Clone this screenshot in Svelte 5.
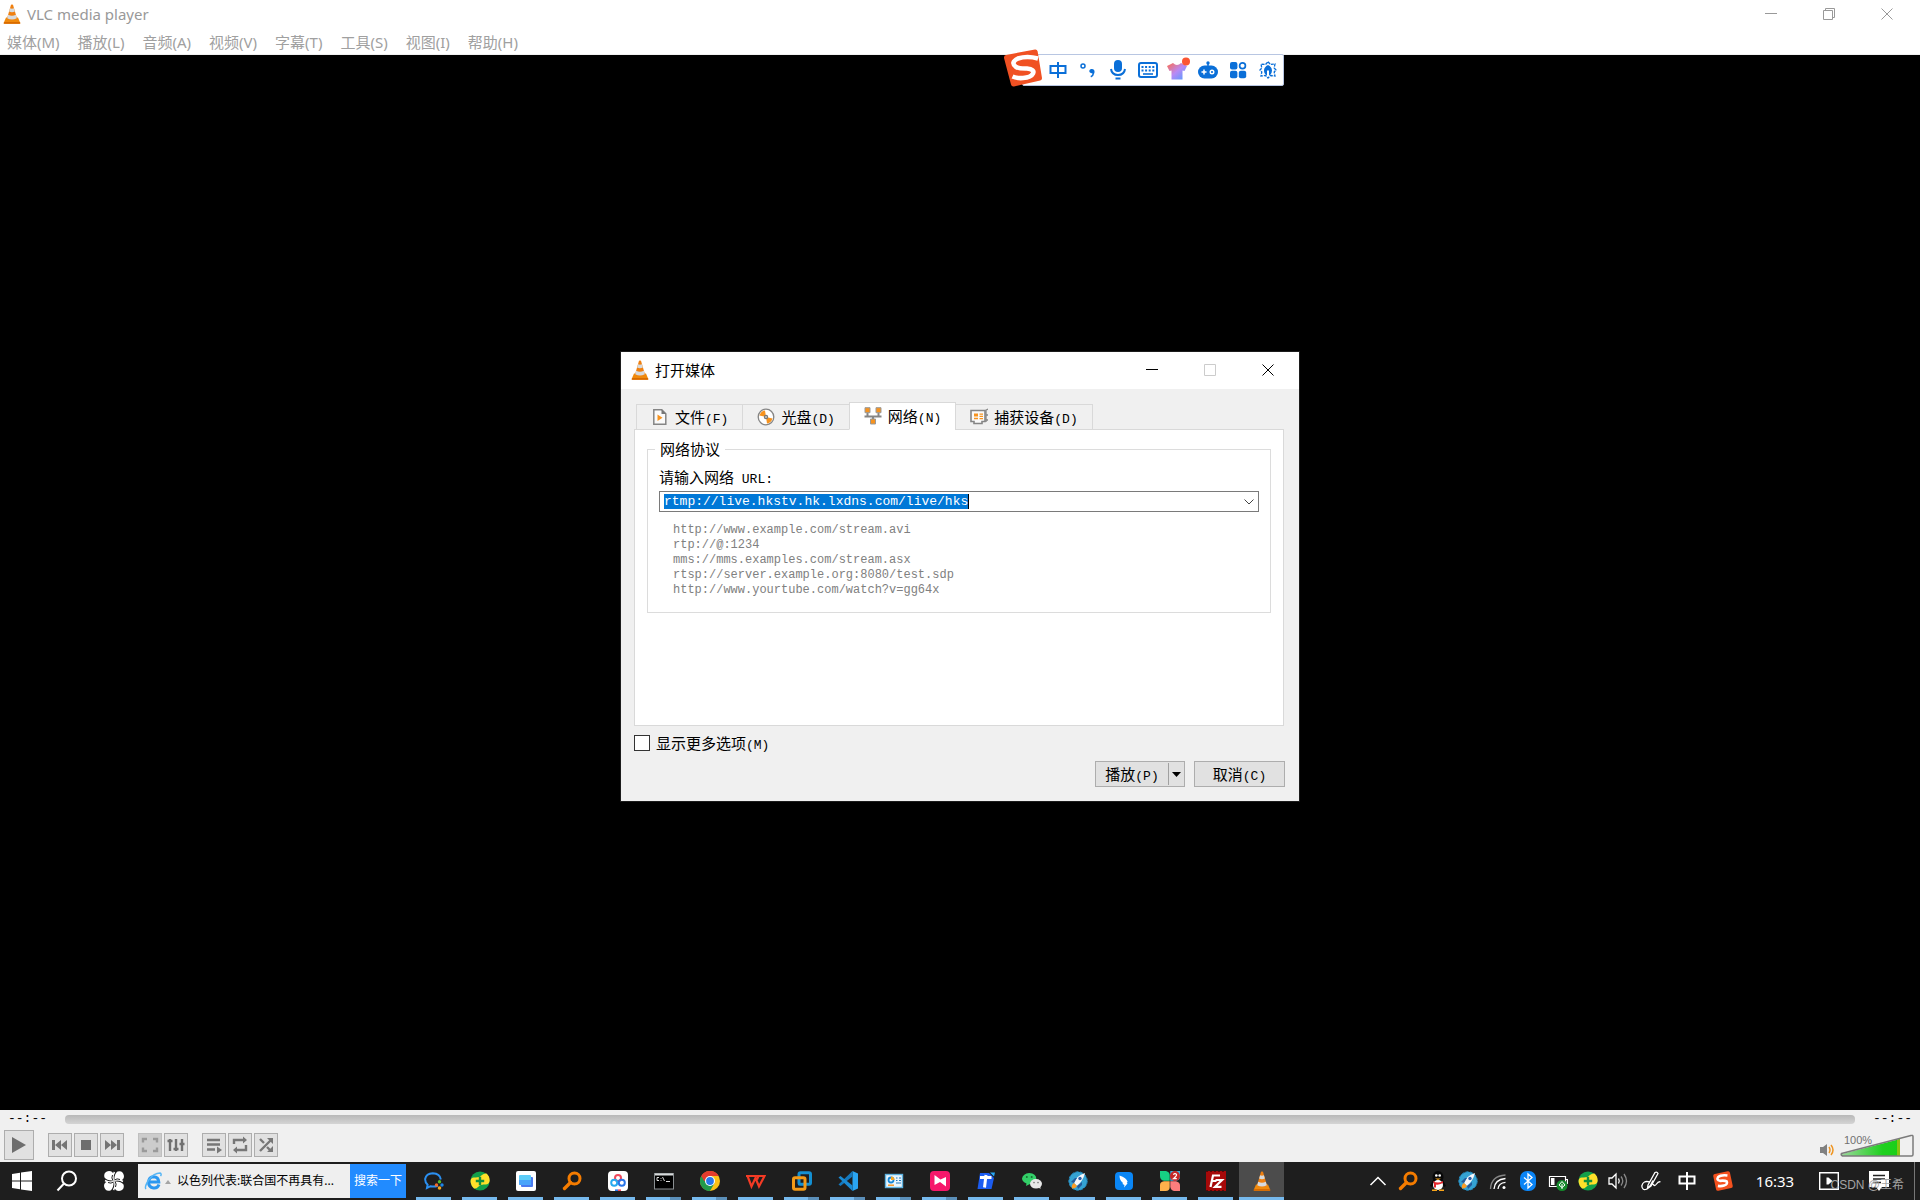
<script>
  const menus = ['媒体(M)', '播放(L)', '音频(A)', '视频(V)', '字幕(T)', '工具(S)', '视图(I)', '帮助(H)'];
  const examples = [
    'http://www.example.com/stream.avi',
    'rtp://@:1234',
    'mms://mms.examples.com/stream.asx',
    'rtsp://server.example.org:8080/test.sdp',
    'http://www.yourtube.com/watch?v=gg64x'
  ];
  let url = $state('rtmp://live.hkstv.hk.lxdns.com/live/hks');
  let more = $state(false);
  let volume = $state(100);
  let position = $state(0);
</script>

{#snippet cone()}
  <svg width="18" height="20" viewBox="0 0 18 20">
    <path d="M3 13.5h12l2.200 5.200q.2 1-.8 1H1.600q-1 0-.8-1z" fill="#f08a0c" />
    <path d="M1 18h16l.3 1.200q0 .6-.8.6h-15q-.8 0-.8-.6z" fill="#d96b00" />
    <path d="M8 .8q1-.8 2 0l4 13.600q-5 3.200-10 0z" fill="#f08010" />
    <path d="M7.100 4.200q1.900.9 3.800 0l1 3.400q-2.900 1.400-5.800 0zM5.200 10.700q3.800 1.900 7.600 0l1 3.500q-4.800 2.500-9.600 0z" fill="#d6dade" />
  </svg>
{/snippet}
{#snippet lens()}
  <svg width="20" height="20" viewBox="0 0 20 20" fill="none" stroke="#f57c00">
    <circle cx="12.500" cy="7.500" r="5.500" stroke-width="3" />
    <path d="M8.500 11.500L2.500 17.500" stroke-width="3.400" stroke-linecap="round" />
  </svg>
{/snippet}
{#snippet rocket()}
  <svg width="20" height="20" viewBox="0 0 20 20">
    <circle cx="10" cy="10" r="9.200" fill="#35a3d3" stroke="#2388bd" stroke-dasharray="3 1.500" />
    <path d="M6 12Q8 5 17 2Q15 10 9 15z" fill="#f5f8fb" />
    <path d="M6 12l-3-1 4-4h2zM9 15l1 3 4-4v-3z" fill="#245a9c" />
    <circle cx="12" cy="7.500" r="1.700" fill="#2a5ea8" />
    <path d="M6 12l3 3q-2 3-5 2.500Q3 14 6 12z" fill="#ff9d22" />
  </svg>
{/snippet}
{#snippet guard()}
  <svg width="20" height="20" viewBox="0 0 20 20">
    <circle cx="10" cy="10" r="9.600" fill="#12a04a" />
    <path d="M.8 12Q-.2 6 4.500 6.500 9.500 7 12 4q2-2 4.500-1.500 3.200 2.500 3.200 7-.5 4.500-5 4Q10 13 8 16q-1.500 1.800-4 1.500Q1.500 15.500.8 12z" fill="#ffe02a" />
    <path d="M10 5.800v8.400M5.800 10h8.400" stroke="#129040" stroke-width="2.400" />
  </svg>
{/snippet}
{#snippet sogou()}
  <svg width="20" height="20" viewBox="0 0 20 20">
    <g transform="rotate(-12 10 10)">
      <rect x="1.500" y="1.500" width="17" height="17" rx="2" fill="#f4511e" />
      <path d="M15.500 5.500Q9 3.300 6 5.200q-2.500 2.500 1 4 5 .5 6.500 2 .8 3-3.500 3.500-3 .3-6-1" fill="none" stroke="#fff" stroke-width="2.600" />
    </g>
  </svg>
{/snippet}

{#snippet chat()}
  <svg width="20" height="20" viewBox="0 0 20 20">
    <path d="M14 14.500q-3.500 1.800-7.500.7L3 17l.6-3.200Q.8 11 1.200 7.700 2.200 2.600 8.800 2.200 16 2.400 16.800 8.500" fill="none" stroke="#2b8ff0" stroke-width="2" />
    <circle cx="15.500" cy="10.800" r="1.700" fill="#55bd2c" /><circle cx="18" cy="14" r="1.700" fill="#1d86e8" />
    <circle cx="15.500" cy="17" r="1.800" fill="#f7a51c" /><circle cx="12.500" cy="14" r="1.700" fill="#f56a27" />
  </svg>
{/snippet}
{#snippet files()}
  <svg width="20" height="20" viewBox="0 0 20 20">
    <rect width="20" height="20" rx="2" fill="#fff" />
    <path d="M5 6h11q1 0 1 1v8q0 1-1 1H6q-1 0-1-1z" fill="#4a7af0" />
    <path d="M3 5q0-1 1-1h10q1 0 1 1v8q0 1-1 1H4q-1 0-1-1z" fill="#5ccdf8" />
    <path d="M3 9h12v5H4q-1 0-1-1z" fill="#4aa4fa" />
  </svg>
{/snippet}
{#snippet netdisk()}
  <svg width="20" height="20" viewBox="0 0 20 20">
    <rect width="20" height="20" rx="4" fill="#fff" />
    <g fill="none" stroke-width="2"><circle cx="10" cy="7" r="3" stroke="#f0495c" /><circle cx="6.200" cy="11.800" r="3" stroke="#27a9ef" /><circle cx="13.800" cy="11.800" r="3" stroke="#2a75e8" /></g>
    <path d="M7 19.200h3" stroke="#2979e8" stroke-width="1.600" /><path d="M10 19.200h3" stroke="#f0495c" stroke-width="1.600" />
  </svg>
{/snippet}
{#snippet terminal()}
  <svg width="20" height="20" viewBox="0 0 20 20">
    <rect x=".5" y="2.500" width="19" height="15.500" fill="#000" stroke="#8a8f92" />
    <path d="M1 3.500h18" stroke="#d7dadb" stroke-width="2" />
    <path d="M5 6.500H3v3h2M7 7v.8M7 9v.8M8.500 6l2 4M12 10.500h4" fill="none" stroke="#ddd" />
  </svg>
{/snippet}
{#snippet chrome()}
  <svg width="20" height="20" viewBox="0 0 20 20">
    <circle cx="10" cy="10" r="10" fill="#fbc116" />
    <path d="M10 10L1.300 5A10 10 0 0 0 10 20l4.400-7.500z" fill="#229a4b" />
    <path d="M1.300 5A10 10 0 0 1 18.700 5H10v5H4.200z" fill="#e33b2e" />
    <circle cx="10" cy="10" r="5" fill="#fff" /><circle cx="10" cy="10" r="3.900" fill="#2878ea" />
  </svg>
{/snippet}
{#snippet wps()}
  <svg width="20" height="20" viewBox="0 0 20 20" fill="none" stroke="#f43b25" stroke-width="2.200">
    <path d="M0 5h12M1.500 5l4 10.500L9.500 7l3.500 8.500L18.500 5H12.500l-1.500 3.500" />
  </svg>
{/snippet}
{#snippet vmware()}
  <svg width="20" height="20" viewBox="0 0 20 20" fill="none" stroke-width="3">
    <rect x="7" y="1.700" width="11.500" height="11.500" rx="1.500" stroke="#1490d2" />
    <rect x="1.500" y="6.800" width="11.500" height="11.500" rx="1.500" stroke="#f39a17" />
    <path d="M7 9v4.200h4" stroke="#1490d2" stroke-width="2" />
  </svg>
{/snippet}
{#snippet vscode()}
  <svg width="20" height="20" viewBox="0 0 20 20">
    <path d="M14.500 0L20 2.400v15.200L14.500 20z" fill="#2aa5f2" />
    <path d="M14.500 0v5.500L2.500 15 .5 13.500z" fill="#1479be" /><path d="M14.500 20v-5.500L2.500 5 .5 6.500z" fill="#1b8bd4" />
  </svg>
{/snippet}
{#snippet panel()}
  <svg width="20" height="20" viewBox="0 0 20 20">
    <rect x="1.500" y="3.500" width="17" height="13" fill="#e9f6fe" stroke="#5fb2df" stroke-width="1.400" />
    <circle cx="7" cy="9" r="2.500" fill="none" stroke="#1887d6" stroke-width="1.800" /><path d="M7 9V5.500a3.500 3.500 0 0 1 3.500 3.500z" fill="#f5a623" />
    <path d="M12 7h1.500M15 7h2M12 9.500h1.500M15 9.500h2M12 12h5" stroke="#2277bb" /><path d="M4 14.200h6" stroke="#f5921e" stroke-width="1.400" />
  </svg>
{/snippet}
{#snippet pink()}
  <svg width="20" height="20" viewBox="0 0 20 20">
    <rect width="20" height="20" rx="4" fill="#f6186b" /><path d="M4.500 4l6 4.500L16 6v9.500L10 11l-5.500 3z" fill="#fff" />
  </svg>
{/snippet}
{#snippet todesk()}
  <svg width="20" height="20" viewBox="0 0 20 20">
    <path d="M4 2h9l5 5-2.500 11H1.500z" fill="#1c5cf0" /><path d="M14 1.500h5l-1 4z" fill="#25a7f7" />
    <path d="M4 6.500h11.500M10 4L8.500 16.500" stroke="#fff" stroke-width="3" />
  </svg>
{/snippet}
{#snippet wechat()}
  <svg width="20" height="20" viewBox="0 0 20 20">
    <path d="M7.200 2q7 .5 7.200 6-1 5-7 5.300l-3.400 1.700.5-2.400Q0 10.500 0 7.500 1 2.500 7.200 2z" fill="#33cf68" />
    <circle cx="4.800" cy="6" r="1" fill="#176f34" /><circle cx="9.700" cy="6" r="1" fill="#176f34" />
    <ellipse cx="14" cy="12.800" rx="6" ry="4.800" fill="#e8e8e8" /><path d="M16 16l2.500 2-.3-3.500z" fill="#e8e8e8" />
    <circle cx="12" cy="11.600" r=".8" fill="#777" /><circle cx="16" cy="11.600" r=".8" fill="#777" />
  </svg>
{/snippet}
{#snippet wing()}
  <svg width="20" height="20" viewBox="0 0 20 20">
    <rect x="1" y="1" width="18" height="18" rx="4" fill="#0a86f5" />
    <path d="M5.500 4.500q7 2 8.200 6.500l-1 .5.8 1-3.500 4 .5-2.500-2-1 .5-1Q5.500 9.500 5.500 4.500z" fill="#fff" />
  </svg>
{/snippet}
{#snippet clover()}
  <svg width="20" height="20" viewBox="0 0 20 20">
    <path d="M0 0h6q3.700 1 3.700 4v5.700H4Q0 9 0 5z" fill="#16cf84" /><path d="M10.300 0H20v6q0 3-4 3.700h-5.700z" fill="#35b8e8" />
    <path d="M4 10.300h5.700V16q0 4-4 4H0v-6q0-3 4-3.700z" fill="#fdb14b" /><path d="M10.300 10.300H16q4 1 4 4V20h-6q-3-.5-3.700-4z" fill="#fb7d7d" />
    <circle cx="15" cy="5" r="5" fill="#c62828" />
    <path d="M13.300 3.600q1.700-1.800 3.200-.2.500 1.400-3 4.200h3.300" fill="none" stroke="#fff" stroke-width="1.200" />
  </svg>
{/snippet}
{#snippet filezilla()}
  <svg width="20" height="20" viewBox="0 0 20 20">
    <rect width="20" height="20" fill="#a60909" /><path d="M0 .5h20M0 19.500h20" stroke="#5d0505" stroke-dasharray="2 2" />
    <path d="M4.500 16L7 4.500h7M5.500 10h5M9.500 9H16l-7 6.800h6.500" fill="none" stroke="#fff" stroke-width="2.200" />
  </svg>
{/snippet}

{#snippet closeGlyph()}
  <svg width="12" height="12" viewBox="0 0 12 12"><path d="M.5.5l11 11M11.500.5l-11 11" fill="none" stroke="currentColor" /></svg>
{/snippet}
{#snippet minGlyph()}
  <svg width="12" height="12" viewBox="0 0 12 12"><path d="M0 5.500h12" stroke="currentColor" /></svg>
{/snippet}

<div class="desktop">
  <header class="titlebar">
    {@render cone()}
    <h1>VLC media player</h1>
    <div class="winbtns">
      <button aria-label="最小化">{@render minGlyph()}</button>
      <button aria-label="还原"><svg width="12" height="12" viewBox="0 0 12 12" fill="none" stroke="currentColor"><path d="M.5 2.500h9v9h-9zM2.500 2.500v-2h9v9h-2" /></svg></button>
      <button aria-label="关闭">{@render closeGlyph()}</button>
    </div>
  </header>
  <nav class="menubar">
    {#each menus as m}<button>{m}</button>{/each}
  </nav>

  <main class="video"></main>

  <section class="player">
    <div class="seek">
      <span>--:--</span>
      <input type="range" min="0" max="100" bind:value={position} disabled aria-label="播放进度" />
      <span>--:--</span>
    </div>
    <div class="controls">
      <button class="big" aria-label="播放"><svg width="28" height="28" viewBox="0 0 28 28"><path d="M7 6l14 8-14 8z" fill="#6e6e6e" /></svg></button>
      <div class="group">
        <button aria-label="上一个"><svg width="22" height="22" viewBox="0 0 22 22" fill="#747474"><path d="M3 6h3v10H3zM12 6v10l-6-5zM18 6v10l-6-5z" /></svg></button>
        <button aria-label="停止"><svg width="22" height="22" viewBox="0 0 22 22"><path d="M6 6h10v10H6z" fill="#6e6e6e" /></svg></button>
        <button aria-label="下一个"><svg width="22" height="22" viewBox="0 0 22 22" fill="#747474"><path d="M16 6h3v10h-3zM10 6v10l6-5zM4 6v10l6-5z" /></svg></button>
      </div>
      <div class="group">
        <button class="off" aria-label="全屏"><svg width="22" height="22" viewBox="0 0 22 22" fill="none" stroke="#9a9a9a" stroke-width="2.400"><path d="M4 8.500V5h4M14 5h4v3.500M18 13.500V17h-4M8 17H4v-3.500" /></svg></button>
        <button aria-label="扩展设置"><svg width="22" height="22" viewBox="0 0 22 22" fill="none" stroke="#707070" stroke-width="2.400"><path d="M5 5v12M11 5v12M17 5v12M2.500 7h5M8.500 15h5M14.500 10h5" /></svg></button>
      </div>
      <div class="group">
        <button aria-label="播放列表"><svg width="22" height="22" viewBox="0 0 22 22"><path d="M4 6h13M4 10.500h13M4 15.500h8" stroke="#777" stroke-width="2.400" /><path d="M14 12.500l5 3.500-5 3.500z" fill="#777" /></svg></button>
        <button aria-label="循环"><svg width="22" height="22" viewBox="0 0 22 22" fill="none" stroke="#777" stroke-width="2.400"><path d="M5 10V6h10M17 11v5H7" /><path d="M14 2.500L18 6l-4 3.500zM8 12.500L4 16l4 3.500z" fill="#777" stroke="none" /></svg></button>
        <button aria-label="随机"><svg width="22" height="22" viewBox="0 0 22 22" fill="none" stroke="#777" stroke-width="2.400"><path d="M5 17L16 6M5 5l4 4M12 13l4 4" /><path d="M12 4h6v6zM18 12v6h-6z" fill="#777" stroke="none" /></svg></button>
      </div>
      <label class="volume">
        <svg width="16" height="14" viewBox="0 0 16 14"><path d="M1 4h3l4-3v12l-4-3H1z" fill="#808080" /><path d="M10 4q2 3 0 6M12 2q4 5 0 10" fill="none" stroke="#ef9522" stroke-width="1.500" /></svg>
        <span class="meter">
          <svg width="74" height="23" viewBox="0 0 74 23">
            <defs><linearGradient id="vol"><stop offset="0" stop-color="#9ad79a" /><stop offset=".7" stop-color="#1fd01f" /><stop offset="1" stop-color="#19cf19" /></linearGradient></defs>
            <path d="M2 20L60 5v17H2z" fill="url(#vol)" /><path d="M57 6l3-1v17h-3z" fill="#86c512" />
            <path d="M1.500 19.500L71 1.500q2-.5 2 1v18q0 1.500-1.500 1.500H2.500q-2-1-1-2.500z" fill="none" stroke="#7b7b7b" stroke-width="1.500" />
          </svg>
          <span class="pct">{volume}%</span>
          <input type="range" min="0" max="125" bind:value={volume} aria-label="音量" />
        </span>
      </label>
    </div>
  </section>

  <footer class="taskbar">
    <button class="sys" aria-label="开始"><svg width="20" height="20" viewBox="0 0 20 20" fill="#fff"><path d="M0 3l8-1.200v7.700H0zM9 1.600L20 0v9.500H9zM0 10.500h8v7.700L0 17zM9 10.500h11V20L9 18.400z" /></svg></button>
    <button class="sys" aria-label="搜索"><svg width="22" height="22" viewBox="0 0 22 22" fill="none" stroke="#fff" stroke-width="2"><circle cx="13" cy="8.500" r="7" /><path d="M8 13.500L1.500 20.500" /></svg></button>
    <button class="sys last" aria-label="浏览"><svg width="20" height="20" viewBox="0 0 20 20"><path d="M5 0q4 0 4.500 4v5.500Q3 10 .5 6.500-1 1 5 0zM20 5q0 4-4 4.500h-5.500Q10 3 13.500.5 19 -1 20 5zM15 20q-4 0-4.500-4v-5.500Q17 10 19.500 13.500 21 19 15 20zM0 15q0-4 4-4.500h5.500Q10 17 6.500 19.500 1 21 0 15z" fill="#fff" /><path d="M10 10Q7 7 10.500 1M10 10q3-3 9 .5M10 10q3 3-.5 9M10 10q-3 3-9-.5" fill="none" stroke="#fff" stroke-width="1.500" /><path d="M9 9.500Q7 7 8.500 4M10.500 9q2.500-2 5.500-.5M11 10.500q2 2.500.5 5.500M9.500 11q-2.500 2-5.500.500" fill="none" stroke="#1e1e1e" stroke-width="1" /></svg></button>
    <form class="news" onsubmit={(e) => e.preventDefault()}>
      <svg width="18" height="20" viewBox="0 0 18 20" fill="none"><path d="M15 13.500q-1.500 4-5.500 3.500-5-.8-5-6 .5-5 5-5.300 5 .3 5.300 5.300H5.500" stroke="#2b97f0" stroke-width="3" /><path d="M2 18Q0 16 5 8.500 10 2 16 2q2 1 .5 3" stroke="#55b5f5" stroke-width="1.500" /></svg>
      <svg width="6" height="4" viewBox="0 0 6 4"><path d="M3 0l3 4H0z" fill="#a5a5a5" /></svg>
      <a href="#news">以色列代表:联合国不再具有...</a>
      <button>搜索一下</button>
    </form>
    <div class="apps">
      {#each [{ n: '企业微信', i: chat }, { n: '360', i: guard }, { n: '文件', i: files }, { n: 'Everything', i: lens }, { n: '网盘', i: netdisk }, { n: '命令提示符', i: terminal, multi: true }, { n: 'Chrome', i: chrome, multi: true }, { n: 'WPS', i: wps }, { n: 'VMware', i: vmware, multi: true }, { n: 'VS Code', i: vscode, multi: true }, { n: '控制面板', i: panel, multi: true }, { n: '录屏', i: pink, multi: true }, { n: 'ToDesk', i: todesk }, { n: '微信', i: wechat }, { n: '火箭', i: rocket }, { n: '飞书', i: wing }, { n: '消息', i: clover }, { n: 'FileZilla', i: filezilla }, { n: 'VLC', i: cone, active: true }] as app}
        <button class:multi={app.multi} class:active={app.active} aria-label={app.n}>{@render app.i()}</button>
      {/each}
    </div>
    <div class="tray">
      <button aria-label="显示隐藏的图标"><svg width="18" height="20" viewBox="0 0 18 20"><path d="M1.500 14L9 6.500l7.500 7.500" fill="none" stroke="#fff" stroke-width="1.500" /></svg></button>
      <button aria-label="Everything">{@render lens()}</button>
      <button aria-label="QQ"><svg width="18" height="20" viewBox="0 0 18 20"><ellipse cx="9" cy="6" rx="5.500" ry="6" fill="#080808" /><path d="M4 9h10l3 6-2 1-1-2-5 5-5-5-1 2-2-1z" fill="#080808" /><ellipse cx="9" cy="14" rx="5" ry="5" fill="#fff" /><path d="M4 10q5 3 10 0v2q-5 2.500-7 1.500v3H5v-4z" fill="#e5262c" /><circle cx="7.300" cy="4.500" r="1.300" fill="#fff" /><circle cx="10.700" cy="4.500" r="1.300" fill="#fff" /><path d="M6 7.500h6l-3 1.500zM3 18.500h5v1.500H3zM10 18.500h5v1.500h-5z" fill="#f9a51a" /></svg></button>
      <button aria-label="火箭">{@render rocket()}</button>
      <button aria-label="网络"><svg width="18" height="20" viewBox="0 0 18 20" fill="none" stroke="#fff" stroke-width="1.300"><path d="M1.500 18Q2 5 16.500 4" stroke="#858585" /><path d="M5 18q.5-9.500 11.500-10.500M9 18q.5-6 7.500-6.700" /><circle cx="15" cy="16.500" r="1.500" fill="#fff" stroke="none" /></svg></button>
      <button aria-label="蓝牙"><svg width="16" height="20" viewBox="0 0 16 20"><rect width="16" height="20" rx="7" fill="#0a84f5" /><path d="M4 6.500l8 7-4 3.500V3l4 3.500-8 7" fill="none" stroke="#fff" stroke-width="1.300" /></svg></button>
      <button aria-label="电池"><svg width="20" height="20" viewBox="0 0 20 20"><path d="M1.500 5.500h16v10h-16zM18 8.500h1.500v4H18" fill="none" stroke="#fff" stroke-width="1.200" /><path d="M3 7h3.500v7H3z" fill="#fff" /><circle cx="14" cy="14.500" r="5.500" fill="#148a2b" /><path d="M14 10.500l3 3.500-3 2.500-3-2.500zM14 13v5" fill="none" stroke="#fff" /></svg></button>
      <button aria-label="360">{@render guard()}</button>
      <button aria-label="音量"><svg width="20" height="20" viewBox="0 0 20 20" fill="none" stroke="#fff" stroke-width="1.300"><path d="M1 7h3l4-4v14l-4-4H1zM10.500 7.500q1.500 2.500 0 5" /><path d="M13 5.500q3.500 4.500 0 9M16 3q5 7 0 14" stroke="#8a8a8a" /></svg></button>
      <button class="wide" aria-label="笔"><svg width="20" height="20" viewBox="0 0 20 20" fill="none" stroke="#fff" stroke-width="1.300"><path d="M7 14L14 1.500q2-1 3 1L10 15l-3.500 2.500zM9 11Q2 9 .8 15q.5 5 5 3Q10 15 12 9.500M12 13q1.500 3 3.500 0t4-2" /></svg></button>
      <button class="wide" aria-label="中文输入"><svg width="18" height="18" viewBox="0 0 18 18" fill="none" stroke="#fff" stroke-width="2"><path d="M1.500 4.500h15v7h-15zM9 0v18" /></svg></button>
      <button class="wide" aria-label="搜狗输入法">{@render sogou()}</button>
      <time>16:33</time>
      <button class="cast" aria-label="播放窗口"><svg width="20" height="18" viewBox="0 0 20 18"><path d="M.7.700h18.600v16.600H.7z" fill="none" stroke="#fff" stroke-width="1.400" /><path d="M7.500 5.500h2l4 3.500-4 3.500h-2z" fill="#fff" /></svg></button>
      <button class="notes" aria-label="通知"><svg width="20" height="20" viewBox="0 0 20 20"><path d="M0 0h20v16h-7l-3 4-3-4H0z" fill="#fff" /><path d="M4 4.500h12M4 8h12M4 11.500h8" stroke="#222" stroke-width="1.300" /></svg></button>
      <span class="peek"></span>
    </div>
    <span class="watermark">CSDN @王希</span>
  </footer>

  <aside class="ime">
    <button class="logo" aria-label="搜狗"><svg width="40" height="38" viewBox="0 0 40 38"><path d="M3 6L32 .5q2-.3 2.600 1.700L39 29q.2 2-1.800 2.600L11 37.500q-2.500.3-3-2L1 9q-.3-2.500 2-3z" fill="#f05123" /><path d="M35 9.500Q24 6.500 15 9.500q-8 4-2 8.500 3 1.700 11 1.500 8 .8 6 5-2 4-10 4.500-6 .5-10.500-1.500" fill="none" stroke="#fff" stroke-width="4.600" /></svg></button>
    <button aria-label="中文"><svg width="18" height="18" viewBox="0 0 18 18" fill="none" stroke="#0a6fd8" stroke-width="2"><path d="M1.500 5h15v7h-15zM9 1v16" /></svg></button>
    <button aria-label="标点"><svg width="18" height="18" viewBox="0 0 18 18"><circle cx="4" cy="5" r="2" fill="none" stroke="#0a6fd8" stroke-width="1.500" /><path d="M12 8q4-.5 3.500 3.500Q15 15 12 16.500l-.5-1.500q2-1 2-2.500Q10 12 10.300 9.800 10.500 8.500 12 8z" fill="#0a6fd8" /></svg></button>
    <button aria-label="语音"><svg width="18" height="20" viewBox="0 0 18 20"><rect x="5" y="0" width="8" height="12" rx="4" fill="#0a6fd8" /><path d="M2 9q.8 6 7 6t7-6M6.500 18.500h5" fill="none" stroke="#0a6fd8" stroke-width="2" /></svg></button>
    <button aria-label="键盘"><svg width="20" height="18" viewBox="0 0 20 18"><rect x="1" y="2" width="18" height="14" rx="2" fill="none" stroke="#0a6fd8" stroke-width="2" /><path d="M3.500 6h13M3.500 9.500h13" stroke="#0a6fd8" stroke-width="2" stroke-dasharray="2 1.600" /><path d="M5 13h10" stroke="#0a6fd8" stroke-width="1.600" /></svg></button>
    <button aria-label="皮肤"><svg width="24" height="26" viewBox="0 0 24 26"><defs><linearGradient id="shirt" x2="1" y2="1"><stop offset="0" stop-color="#ff6b4a" /><stop offset=".5" stop-color="#b98af5" /><stop offset="1" stop-color="#4a9dff" /></linearGradient></defs><path d="M7 6q4 4 8 0l6 3-2.500 5-2-.5v9h-11v-9l-2 .5L1 9z" fill="url(#shirt)" /><circle cx="20" cy="4.500" r="4" fill="#fb5533" /></svg></button>
    <button aria-label="游戏"><svg width="20" height="18" viewBox="0 0 20 18"><circle cx="10" cy="2" r="1.700" fill="#0a6fd8" /><path d="M10 2v4" stroke="#0a6fd8" stroke-width="1.500" /><rect x="0" y="4.500" width="20" height="13" rx="6.500" fill="#0a6fd8" /><path d="M3.500 11h5M6 8.500v5" stroke="#fff" stroke-width="1.500" /><circle cx="14" cy="11" r="1.800" fill="none" stroke="#fff" stroke-width="1.400" /></svg></button>
    <button aria-label="工具箱"><svg width="18" height="18" viewBox="0 0 18 18" fill="#0a6fd8"><rect x="1" y="1" width="7.400" height="7.400" rx="2" /><rect x="1" y="9.800" width="7.400" height="7.400" rx="2" /><rect x="9.800" y="9.800" width="7.400" height="7.400" rx="2" /><circle cx="13.500" cy="4.700" r="2.900" fill="none" stroke="#0a6fd8" stroke-width="1.700" /></svg></button>
    <button aria-label="设置"><svg width="18" height="18" viewBox="0 0 18 18"><path d="M9 .8l2.500 2.700L16 3l-.8 4L17 9l-1.800 2 .8 4-4.500-.5L9 17l-2.500-2.500L2 15l.8-4L1 9l1.800-2L2 3l4.500.5z" fill="none" stroke="#0a6fd8" stroke-width="1.300" stroke-dasharray="3 1" /><path d="M9 4q4 2 4 5.500t-3 5V9.500H8v5q-3-1.500-3-5T9 4z" fill="#0a6fd8" /></svg></button>
  </aside>

  <div class="dialog" role="dialog" aria-labelledby="dlg-title">
    <header>
      {@render cone()}
      <h2 id="dlg-title">打开媒体</h2>
      <div class="winbtns">
        <button aria-label="最小化">{@render minGlyph()}</button>
        <button aria-label="最大化" disabled><svg width="12" height="12" viewBox="0 0 12 12"><path d="M.5.5h11v11H.5z" fill="none" stroke="#ccc" /></svg></button>
        <button aria-label="关闭">{@render closeGlyph()}</button>
      </div>
    </header>
    <div class="body">
      <div class="tabs" role="tablist">
        <button role="tab" aria-selected="false"><svg width="18" height="18" viewBox="0 0 18 18"><path d="M2.800 1.800h8l4 4v10.400h-12z" fill="#fafafa" stroke="#858585" stroke-width="1.500" /><path d="M10.500 1.500v4.500h4.500z" fill="#777" /><path d="M6.500 6.500l5 3.200-5 3.200z" fill="#f7931e" /></svg><span>文件<i>(F)</i></span></button>
        <button role="tab" aria-selected="false"><svg width="18" height="18" viewBox="0 0 18 18"><circle cx="9" cy="9" r="7.800" fill="#fff" stroke="#858585" stroke-width="1.300" /><path d="M9 9L2.500 7.500Q4 2.800 8 2.500zM9 9l6.500 1.500Q14 15.200 10 15.500z" fill="#f7931e" /><circle cx="9" cy="9" r="2.200" fill="#777" /><circle cx="9" cy="9" r=".8" fill="#fff" /></svg><span>光盘<i>(D)</i></span></button>
        <button role="tab" aria-selected="true" class="on"><svg width="18" height="18" viewBox="0 0 18 18"><path d="M3.500 5v4M14.500 5v4M.5 9.500h17M9 9v4" fill="none" stroke="#858585" stroke-width="2" /><g fill="#f7931e" stroke="#999" stroke-width="1"><path d="M1 .7h5v5H1zM12 .7h5v5h-5zM6.500 12h5v5h-5z" /></g></svg><span>网络<i>(N)</i></span></button>
        <button role="tab" aria-selected="false"><svg width="18" height="18" viewBox="0 0 18 18"><path d="M1 2.500h14v11h-3v2H4v-2H1z" fill="#fafafa" stroke="#858585" stroke-width="1.600" /><path d="M16 2v12M15.500 2.500L18 1M15.500 7h2.500M15.500 12h2.500" stroke="#858585" stroke-width="1.300" /><path d="M4 5.500h4v3H4zM4 9.800h4v1.400H4zM9.500 5.500h3.500v1.200H9.500zM9.500 7.700h3.500v1.200H9.500zM9.500 9.900h3.500v1.300H9.500z" fill="#f7931e" /></svg><span>捕获设备<i>(D)</i></span></button>
      </div>
      <div class="pane" role="tabpanel">
        <fieldset>
          <legend>网络协议</legend>
          <label for="url">请输入网络<i>&nbsp;URL:</i></label>
          <div class="combo">
            <input id="url" type="text" bind:value={url} spellcheck="false" />
            <button aria-label="展开"><svg width="10" height="6" viewBox="0 0 10 6"><path d="M.5.500l4.500 4.500 4.500-4.500" fill="none" stroke="#444" /></svg></button>
          </div>
          <ul>
            {#each examples as e}<li>{e}</li>{/each}
          </ul>
        </fieldset>
      </div>
      <label class="more"><input type="checkbox" bind:checked={more} /><span>显示更多选项<i>(M)</i></span></label>
      <div class="actions">
        <div class="split">
          <button>播放<i>(P)</i></button>
          <button class="drop" aria-label="更多播放方式"><svg width="9" height="5" viewBox="0 0 9 5"><path d="M0 0h9L4.500 5z" /></svg></button>
        </div>
        <button class="cancel">取消<i>(C)</i></button>
      </div>
    </div>
  </div>
</div>

<style>
  :global(body) { margin: 0; background: #000; }
  * { box-sizing: border-box; }
  .desktop {
    position: relative;
    display: flex;
    flex-direction: column;
    min-height: 100vh;
    font: 15px/20px "Noto Sans", "Noto Sans CJK SC", sans-serif;
    color: #000;
  }
  button { font: inherit; color: inherit; background: none; border: 0; padding: 0; }
  svg { display: block; flex: none; }
  i { font: 13px/1 "Liberation Mono", monospace; }
  h1, h2 { margin: 0; font-size: 15px; font-weight: 400; }

  .titlebar { display: flex; align-items: center; height: 28px; padding: 0 4px 0 3px; background: #fff; color: #999; }
  .titlebar h1 { margin-left: 6px; }
  .winbtns { display: flex; align-self: stretch; margin-left: auto; }
  .winbtns button { display: grid; place-items: center; width: 58px; }
  .menubar { display: flex; gap: 18px; height: 27px; padding: 1px 7px 0; background: #fff; border-bottom: 1px solid #f0f0f0; color: #a0a0a0; }

  .video { flex: 1; background: #000; }

  .player { background: #f0f0f0; padding-bottom: 2px; }
  .seek { display: flex; align-items: center; gap: 18px; height: 18px; padding: 0 8px; margin-bottom: 2px; font: 13px/18px "Liberation Mono", monospace; }
  .seek input { appearance: none; flex: 1; height: 9px; margin: 0; border-radius: 4px; background: linear-gradient(#b8b8b8, #d4d4d4); }
  .seek input::-webkit-slider-thumb { appearance: none; width: 0; height: 0; }
  .controls { display: flex; align-items: center; gap: 14px; padding: 0 6px 0 4px; }
  .controls button { display: grid; place-items: center; width: 24px; height: 24px; border: 1px solid #adadad; background: #e1e1e1; }
  .controls .big { width: 30px; height: 30px; }
  .controls .off { background: #ccc; border-color: #bfbfbf; }
  .group { display: flex; gap: 2px; }
  .volume { display: flex; align-items: flex-end; gap: 5px; margin-left: auto; }
  .meter { position: relative; }
  .pct { position: absolute; left: 4px; top: 0; font: 11px/12px "Liberation Sans", sans-serif; color: #707070; }
  .meter input { position: absolute; inset: 0; width: 100%; height: 100%; margin: 0; opacity: 0; }

  .taskbar { position: relative; display: flex; height: 38px; background: #1e1e1e; color: #fff; }
  .taskbar button { display: grid; place-items: center; }
  .sys { width: 46px; }
  .sys:first-child { width: 44px; }
  .taskbar .last { width: 48px; }
  .news { display: flex; align-items: center; height: 34px; margin: 2px 5px 2px 0; padding-left: 6px; background: #efefef; color: #000; font-size: 12px; }
  .news svg + svg { margin: 2px 6px 0 3px; }
  .news a { width: 173px; color: #000; text-decoration: none; white-space: nowrap; }
  .taskbar .news button { width: 56px; height: 34px; background: #218bff; color: #fff; }
  .apps { display: flex; gap: 1px; }
  .apps button { position: relative; width: 45px; }
  .apps button::after { content: ""; position: absolute; left: 5px; right: 5px; bottom: 0; height: 3px; background: #76b9ed; }
  .apps .multi::after { background: linear-gradient(90deg, #76b9ed 24px, #5b8fb9 24px); }
  .apps .active { background: #4c4c4c; }
  .apps .active::after { left: 0; right: 0; }
  .tray { display: flex; align-items: stretch; margin-left: auto; }
  .tray button { width: 30px; }
  .tray .wide { width: 36px; }
  .tray time { width: 68px; line-height: 38px; text-align: center; }
  .tray .cast { width: 40px; }
  .tray .notes { width: 60px; }
  .peek { width: 6px; margin-left: 5px; border-left: 1px solid #777; }
  .watermark { position: absolute; right: 16px; top: 14px; font: 12px/18px "Liberation Sans", "Noto Sans CJK SC", sans-serif; color: #a3a3a3; }

  .ime { position: absolute; left: 1022px; top: 54px; display: flex; align-items: center; width: 262px; height: 32px; background: #fff; border: 1px solid #b8c6e2; border-radius: 2px; }
  .ime button { display: grid; place-items: center; flex: none; width: 30px; height: 30px; }
  .ime .logo { align-self: flex-start; width: 41px; height: 38px; margin: -6px 0 0 -21px; }

  .dialog { position: absolute; left: calc(50% - 340px); top: 351px; width: 680px; border: 1px solid #1c1c1c; background: #f0f0f0; }
  .dialog header { display: flex; align-items: center; height: 37px; padding: 0 2px 2px 10px; background: #fff; }
  .dialog h2 { margin-left: 6px; }
  .body { padding: 13px 14px 14px 13px; font: 15px/18px "Noto Sans CJK SC", sans-serif; }
  .tabs { display: flex; align-items: flex-end; height: 28px; margin-bottom: -1px; padding-left: 2px; position: relative; }
  .tabs button { display: flex; align-items: center; gap: 6px; height: 26px; padding: 0 14px; margin-right: -1px; border: 1px solid #d9d9d9; }
  .tabs .on { height: 28px; background: #fff; border-bottom-color: #fff; }
  .pane { height: 297px; margin-right: 1px; padding: 10px 12px; background: #fff; border: 1px solid #d9d9d9; }
  fieldset { min-width: 0; margin: 0; padding: 10px 11px 14px; border: 1px solid #dcdcdc; }
  legend { padding: 0 5px; margin-left: -4px; line-height: 18px; }
  fieldset label { display: block; height: 18px; line-height: 18px; }
  .combo { display: flex; align-items: center; height: 21px; margin: 5px 0 11px; padding: 0 4px; border: 1px solid #7a7a7a; background: #fff; }
  .combo input { field-sizing: content; height: 15px; margin: 0; padding: 0; border: 0; border-right: 1px solid #000; background: #0078d7; color: #fff; font: 13px/15px "Liberation Mono", monospace; outline: 0; }
  .combo button { margin-left: auto; }
  ul { margin: 0; padding: 0 0 0 14px; list-style: none; font: 12px/15px "Liberation Mono", monospace; color: #808080; }
  .more { display: flex; align-items: center; gap: 6px; height: 18px; margin-top: 8px; }
  .more input { appearance: none; width: 16px; height: 16px; margin: 0; border: 1px solid #333; background: #fff; }
  .actions { display: flex; justify-content: flex-end; gap: 9px; margin-top: 9px; }
  .split, .actions .cancel { height: 26px; border: 1px solid #adadad; background: #e1e1e1; }
  .split { display: flex; align-items: center; width: 90px; }
  .split button { flex: 1; }
  .split .drop { display: grid; place-items: center; flex: none; width: 16px; height: 22px; border-left: 1px solid #a0a0a0; }
  .actions .cancel { width: 91px; }
</style>
